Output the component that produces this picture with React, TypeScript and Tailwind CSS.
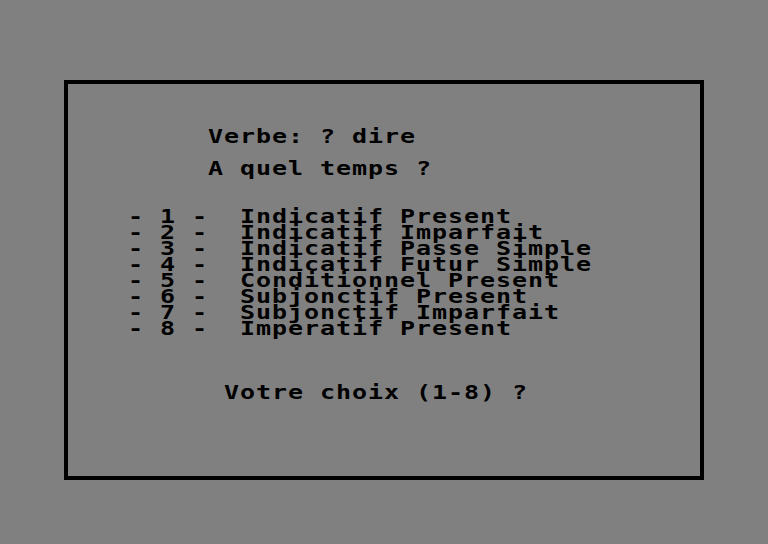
import React from 'react';

const TENSES = [
  'Indicatif Present',
  'Indicatif Imparfait',
  'Indicatif Passe Simple',
  'Indicatif Futur Simple',
  'Conditionnel Present',
  'Subjonctif Present',
  'Subjonctif Imparfait',
  'Imperatif Present',
];

// 16px character cells, like the original 8x8 font drawn at 2x wide
const line = 'w-max h-[16px] leading-[16px] whitespace-pre origin-left scale-x-[1.25]';

export default function App() {
  return (
    <div
      className="w-[768px] h-[544px] overflow-hidden bg-[#808080] pt-[80px] pl-[64px] text-black font-bold text-[20px] tracking-[0.76px]"
      style={{ fontFamily: '"DejaVu Sans Mono", "Liberation Mono", monospace' }}
    >
      <div className="w-[640px] h-[400px] border-4 border-black pt-[44px] pl-[60px]">
        <div className={`${line} ml-[80px]`}>Verbe: ? dire</div>
        <div className={`${line} ml-[80px] mt-[16px]`}>A quel temps ?</div>

        <div className="mt-[32px]">
          {TENSES.map((name, i) => (
            <div key={name} className={line}>
              {`- ${i + 1} -  ${name}`}
            </div>
          ))}
        </div>

        <div className={`${line} ml-[96px] mt-[48px]`}>Votre choix (1-8) ?</div>
      </div>
    </div>
  );
}
